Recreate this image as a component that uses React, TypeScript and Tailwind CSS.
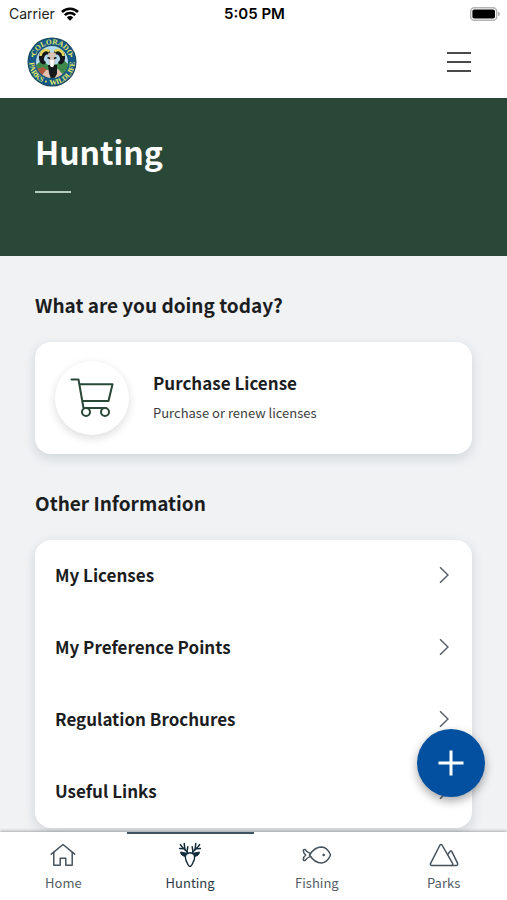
import type { ReactNode } from "react";

interface Tab {
  label: string;
  icon: ReactNode;
  active?: boolean;
}

const links = ["My Licenses", "My Preference Points", "Regulation Brochures", "Useful Links"];

function LogoIcon() {
  return (
    <svg viewBox="0 0 100 100" className="size-[50px]" aria-hidden="true">
      <defs>
        <path id="ring-top" d="M 14.5 50 A 35.5 35.5 0 0 1 85.5 50" />
        <path id="ring-bottom" d="M 7.4 34 A 45.5 45.5 0 1 0 92.6 34" />
        <clipPath id="scene">
          <circle cx="50" cy="50" r="32" />
        </clipPath>
      </defs>
      <circle cx="50" cy="50" r="49" fill="#1d4a5c" />
      <circle cx="50" cy="50" r="47" fill="#14598a" />
      <circle cx="50" cy="50" r="33" fill="#1d4a5c" />
      <g clipPath="url(#scene)">
        <rect x="18" y="18" width="64" height="64" fill="#b4daee" />
        <path d="M18 56 L30 46 L42 56 L60 54 L72 45 L84 56 V84 H18 Z" fill="#3d8a4b" />
        <path d="M18 64 L34 60 L44 72 L40 84 H18 Z" fill="#b0563a" />
        <path d="M24 84 L38 66 L62 64 L80 84 Z" fill="#e3c0b0" />
        <path d="M42 56 L60 56 L60 74 L54 84 H48 L44 72 Z" fill="#15191c" />
        <path
          d="M46 28 C36 18 22 28 24 44 C26 56 36 58 38 50 C33 48 33 42 36 38 C38 35 42 34 46 37 Z"
          fill="#15191c"
        />
        <path
          d="M54 28 C64 18 78 28 76 44 C74 56 64 58 62 50 C67 48 67 42 64 38 C62 35 58 34 54 37 Z"
          fill="#15191c"
        />
        <path d="M45 29 C37 22 28 28 27 38" fill="none" stroke="#e4d85a" strokeWidth="5" />
        <path d="M55 29 C63 22 72 28 73 38" fill="none" stroke="#e4d85a" strokeWidth="5" />
        <path d="M42 33 Q50 27 58 33 L56 50 L53 59 Q50 62 47 59 L44 50 Z" fill="#d8c3b6" />
        <path d="M46 46 H54 L53 58 Q50 62 47 58 Z" fill="#fff" />
        <path d="M41 41 L46 43 M59 41 L54 43" stroke="#15191c" strokeWidth="3" />
      </g>
      <g fill="#e2ea62" fontFamily="Liberation Serif, serif" fontWeight="700" fontSize="15">
        <text textAnchor="middle">
          <textPath href="#ring-top" startOffset="50%">
            COLORADO
          </textPath>
        </text>
        <text textAnchor="middle">
          <textPath href="#ring-bottom" startOffset="24%">
            PARKS
          </textPath>
        </text>
        <text textAnchor="middle">
          <textPath href="#ring-bottom" startOffset="69%">
            WILDLIFE
          </textPath>
        </text>
        <circle cx="11" cy="38" r="2" />
        <circle cx="89" cy="38" r="2" />
        <circle cx="38" cy="89" r="2" />
      </g>
    </svg>
  );
}

function WifiIcon() {
  return (
    <svg viewBox="0 0 18 14" className="h-[14px] w-[18px]" aria-hidden="true">
      <g fill="none" stroke="#000" strokeWidth="2.5">
        <path d="M1 5 A11.4 11.4 0 0 1 17 5" />
        <path d="M3.8 8.2 A7.4 7.4 0 0 1 14.2 8.2" />
      </g>
      <path d="M5.8 10.4 A4.6 4.6 0 0 1 12.2 10.4 L9 13.8 Z" fill="#000" />
    </svg>
  );
}

function BatteryIcon() {
  return (
    <svg viewBox="0 0 30 14" className="h-[14px] w-[30px]" aria-hidden="true">
      <rect x="0.7" y="0.7" width="26" height="12.6" rx="3.6" fill="#fff" stroke="#b4b4b4" strokeWidth="1.4" />
      <rect x="2.4" y="2.4" width="22.6" height="9.2" rx="1.8" fill="#000" />
      <path d="M28 4.8 Q30 5.4 30 7 Q30 8.6 28 9.2 Z" fill="#b4b4b4" />
    </svg>
  );
}

function CartIcon() {
  return (
    <svg
      viewBox="0 0 44 40"
      className="h-10 w-11"
      fill="none"
      stroke="#2a4838"
      strokeWidth="2"
      strokeLinecap="round"
      strokeLinejoin="round"
      aria-hidden="true"
    >
      <path d="M1.5 1.5 H8.5 L13.4 29.5" />
      <path d="M10 6.2 H42.5 L38.5 23 H13" />
      <path d="M14 30 H36" />
      <circle cx="16" cy="34" r="4" />
      <circle cx="35" cy="34" r="4" />
    </svg>
  );
}

function HomeIcon() {
  return (
    <svg
      viewBox="0 0 26 24"
      className="h-6 w-[26px]"
      fill="none"
      stroke="#46525c"
      strokeWidth="1.5"
      strokeLinecap="round"
      strokeLinejoin="round"
      aria-hidden="true"
    >
      <path d="M1.3 11.2 L13 1.5 L24.7 11.2" />
      <path d="M3.8 9.6 V22.3 H10.2 V15.2 H15.8 V22.3 H22.2 V9.6" />
    </svg>
  );
}

function DeerIcon() {
  return (
    <svg
      viewBox="0 0 24 26"
      className="h-[26px] w-6"
      fill="none"
      stroke="#142c3a"
      strokeLinecap="round"
      strokeLinejoin="round"
      aria-hidden="true"
    >
      <g strokeWidth="1.5">
        <path d="M9.6 11 C8 7.2 4.6 6.6 2.4 2.6" />
        <path d="M5.4 6.8 L1.6 6.6" />
        <path d="M7 8 L6.2 1.4" />
        <path d="M9 9.6 L9.8 4.8" />
        <path d="M14.4 11 C16 7.2 19.4 6.6 21.6 2.6" />
        <path d="M18.6 6.8 L22.4 6.6" />
        <path d="M17 8 L17.8 1.4" />
        <path d="M15 9.6 L14.2 4.8" />
      </g>
      <path d="M9.6 11.4 L2.6 10 Q2.6 13.6 7.6 14.6 Z" fill="#142c3a" strokeWidth="1" />
      <path d="M14.4 11.4 L21.4 10 Q21.4 13.6 16.4 14.6 Z" fill="#142c3a" strokeWidth="1" />
      <path
        d="M8 12.6 Q12 8.8 16 12.6 Q17.6 16.4 15 20.4 Q13.4 24.4 12 24.4 Q10.6 24.4 9 20.4 Q6.4 16.4 8 12.6 Z"
        fill="#fff"
        strokeWidth="1.4"
      />
    </svg>
  );
}

function FishIcon() {
  return (
    <svg
      viewBox="0 0 30 18"
      className="h-[18px] w-[30px]"
      fill="none"
      stroke="#46525c"
      strokeWidth="1.5"
      strokeLinecap="round"
      strokeLinejoin="round"
      aria-hidden="true"
    >
      <path d="M7.5 9 Q12.6 1 19.5 1 Q25 1.2 28.2 8.2 Q28.6 9 28.2 9.8 Q25 16.8 19.5 17 Q12.6 17 7.5 9 Z" />
      <path d="M8.5 7.6 Q4.6 6.2 3 3.4 Q1 3.2 1.4 5 Q1.6 7.4 3.8 9 Q1.6 10.6 1.4 13 Q1 14.8 3 14.6 Q4.6 11.8 8.5 10.4" />
      <circle cx="21.6" cy="9" r="0.9" fill="#46525c" strokeWidth="0.8" />
    </svg>
  );
}

function ParksIcon() {
  return (
    <svg
      viewBox="0 0 30 24"
      className="h-6 w-[30px]"
      fill="none"
      stroke="#46525c"
      strokeWidth="1.5"
      strokeLinecap="round"
      strokeLinejoin="round"
      aria-hidden="true"
    >
      <path d="M11 2 Q12 0.8 13 2 L23.6 20.4 Q24.2 22.4 22.4 22.6 H2.4 Q0.8 22.2 1.6 20.4 Z" />
      <path d="M18.8 11.4 L21.2 8.2 Q22 7.6 22.8 8.4 L28.6 20.4 Q29 22.4 27.4 22.6 H22.4" />
    </svg>
  );
}

function ChevronIcon() {
  return (
    <svg viewBox="0 0 10 18" className="h-[18px] w-[10px]" fill="none" stroke="#55606a" strokeWidth="1.5" aria-hidden="true">
      <path d="M1 1.2 L9 9 L1 16.8" />
    </svg>
  );
}

const tabs: Tab[] = [
  { label: "Home", icon: <HomeIcon /> },
  { label: "Hunting", icon: <DeerIcon />, active: true },
  { label: "Fishing", icon: <FishIcon /> },
  { label: "Parks", icon: <ParksIcon /> },
];

export default function App() {
  return (
    <div className="flex min-h-screen flex-col bg-[#f0f2f4] font-['Noto_Sans_CJK_SC',sans-serif] text-[#1c1d1f]">
      <header className="bg-white">
        <div className="grid h-7 grid-cols-3 items-center pl-[9px] pr-[7px] font-['Inter',sans-serif] text-sm text-[#222]">
          <div className="flex items-center gap-1.5">
            Carrier
            <WifiIcon />
          </div>
          <div className="text-center text-[15px] font-semibold text-black">5:05 PM</div>
          <div className="flex justify-end">
            <BatteryIcon />
          </div>
        </div>
        <div className="flex h-[70px] items-center justify-between pb-0.5 pl-[27px] pr-9">
          <a href="#home" aria-label="Colorado Parks and Wildlife">
            <LogoIcon />
          </a>
          <button type="button" aria-label="Menu" className="flex w-6 flex-col gap-[7px]">
            <span className="h-0.5 w-full bg-[#4a4a4c]" />
            <span className="h-0.5 w-full bg-[#4a4a4c]" />
            <span className="h-0.5 w-full bg-[#4a4a4c]" />
          </button>
        </div>
      </header>

      <section className="h-[158px] bg-[#2a4838] px-[35px] pt-[31px]">
        <h1 className="text-[32px] font-bold leading-[44px] text-white">Hunting</h1>
        <div className="mt-[18px] h-0.5 w-9 bg-[#b4cdbf]" />
      </section>

      <main className="flex-1 px-[35px] pb-1 pt-[35px]">
        <h2 className="text-[19px] font-bold leading-7">What are you doing today?</h2>
        <button
          type="button"
          className="mt-[23px] flex h-28 w-full items-center gap-6 rounded-2xl bg-white px-5 text-left shadow-[0_4px_12px_rgba(40,60,70,0.16)]"
        >
          <span className="flex size-[74px] shrink-0 items-center justify-center rounded-full bg-white shadow-[0_3px_10px_rgba(0,0,0,0.14)]">
            <CartIcon />
          </span>
          <span className="flex flex-col gap-1.5">
            <span className="text-[17px] font-bold leading-6">Purchase License</span>
            <span className="text-[13px] leading-6 text-[#3c3d40]">Purchase or renew licenses</span>
          </span>
        </button>

        <h2 className="mt-[35px] text-[19px] font-bold leading-7">Other Information</h2>
        <ul className="mt-[23px] rounded-2xl bg-white shadow-[0_4px_12px_rgba(40,60,70,0.16)]">
          {links.map((link) => (
            <li key={link}>
              <a
                href="#info"
                className="flex h-[72px] items-center justify-between pb-0.5 pl-5 pr-[23px] text-[17px] font-bold leading-6"
              >
                {link}
                <ChevronIcon />
              </a>
            </li>
          ))}
        </ul>
      </main>

      <button
        type="button"
        aria-label="Add"
        className="fixed bottom-[103px] right-[22px] z-20 flex size-[68px] items-center justify-center rounded-full bg-[#02509f] shadow-[0_4px_10px_rgba(0,0,0,0.35)]"
      >
        <svg viewBox="0 0 26 26" className="size-[26px]" stroke="#fff" strokeWidth="3" aria-hidden="true">
          <path d="M13 0.5 V25.5 M0.5 13 H25.5" />
        </svg>
      </button>

      <nav className="sticky bottom-0 z-10 grid h-[69px] grid-cols-4 bg-white shadow-[0_-1px_3px_rgba(0,0,0,0.3)]">
        {tabs.map((tab) => (
          <a
            key={tab.label}
            href="#tab"
            aria-current={tab.active ? "page" : undefined}
            className={`flex flex-col items-center border-t-2 pt-2 text-[13px] leading-6 ${
              tab.active ? "border-[#3f5361] text-[#2c3a45]" : "border-transparent text-[#535d66]"
            }`}
          >
            <span className="flex h-[26px] items-center">{tab.icon}</span>
            <span className="mt-[3px]">{tab.label}</span>
          </a>
        ))}
      </nav>
    </div>
  );
}
